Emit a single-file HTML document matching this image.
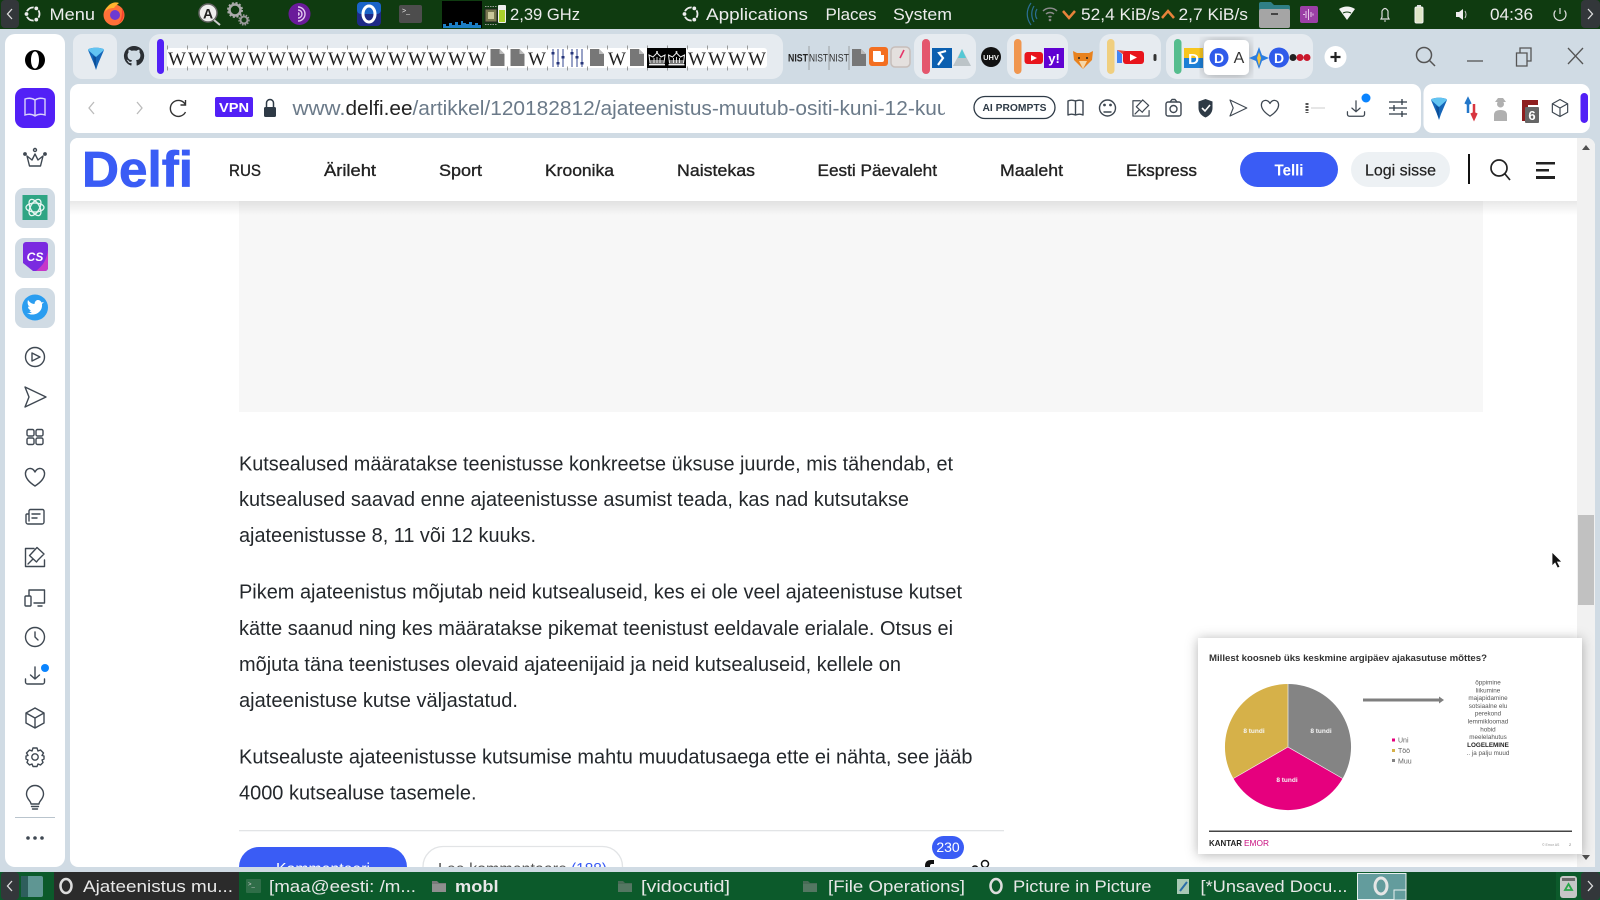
<!DOCTYPE html>
<html lang="et"><head><meta charset="utf-8"><title>Delfi</title>
<style>
html,body{margin:0;padding:0;width:1600px;height:900px;overflow:hidden;background:#d0dbe4}
svg{display:block}
text{font-family:"Liberation Sans",sans-serif}
.s{fill:none;stroke:#3f4852;stroke-width:1.4;stroke-linecap:round;stroke-linejoin:round}
.t{fill:#ececec;font-size:17px}
.b{fill:#e8e8e8;font-size:17px}
.n{fill:#222;font-size:17px;stroke:#222;stroke-width:.35}
.a{fill:#24282c;font-size:20px}
.w{font-family:"Liberation Serif",serif;font-size:19px;fill:#222}
.p{font-size:6.3px;fill:#555;text-anchor:middle}
</style></head><body>
<svg width="1600" height="900" viewBox="0 0 1600 900" xmlns="http://www.w3.org/2000/svg">
<defs>
<clipPath id="page"><path d="M78 138H1587a8 8 0 0 1 8 8V867H78a8 8 0 0 1-8-8V146a8 8 0 0 1 8-8Z"/></clipPath>
<clipPath id="url"><rect x="285" y="90" width="660" height="36"/></clipPath>
<linearGradient id="sh" x1="0" y1="0" x2="0" y2="1"><stop offset="0" stop-color="#000" stop-opacity=".09"/><stop offset="1" stop-color="#000" stop-opacity="0"/></linearGradient>
<filter id="ds" x="-10%" y="-10%" width="120%" height="120%"><feDropShadow dx="0" dy="1" stdDeviation="6" flood-color="#000" flood-opacity=".3"/></filter>
<filter id="soft"><feGaussianBlur stdDeviation=".25"/></filter>
<g id="heart" class="s"><path d="M0 9C-14 0-10-9-4.500-8.500-2.500-8.300-1-7 0-5 1-7 2.500-8.300 4.500-8.500 10-9 14 0 0 9Z"/></g>
<g id="send" class="s"><path d="M-10-10 11 0-10 10-6 0Z"/></g>
<g id="cube" class="s"><path d="M0-10 9-5V5L0 10-9 5V-5ZM-9-5 0 0 9-5M0 0V10"/></g>
<g id="dl" class="s"><path d="M0-9V3M-4.500-1 0 3 4.500-1M-9.500 3V6a2 2 0 0 0 2 2H7.500a2 2 0 0 0 2-2V3"/></g>
<g id="pin" class="s"><path d="M-1-8.500H-9.500V9.500H9.500V3M-7 7-2 2M-4-3 2-9.500 9-3 3 3 1.500 5-5.500-1.500Z"/></g>
<g id="ulogo" fill="none"><circle r="6.500" stroke="#eee" stroke-width="1.800"/><circle cx="-6.500" r="2.400" fill="#eee" stroke="#0f3b10"/><circle cx="3.300" cy="-5.600" r="2.400" fill="#eee" stroke="#0f3b10"/><circle cx="3.300" cy="5.600" r="2.400" fill="#eee" stroke="#0f3b10"/></g>
<g id="folder"><path d="M-7-5H-2L0-3H7V6H-7Z" fill="#7a7a7a"/><rect x="-7" y="-2" width="14" height="8" fill="#8f8f8f"/></g>
<g id="gem"><path d="M-8-6C-8-9 8-9 8-6L2 8 0 14-2 8Z" fill="#1566b8"/><path d="M-8-6C-8-9 8-9 8-6L0 1Z" fill="#62c4f2"/><path d="M-3 0 0 1 0 12-2 8Z" fill="#0c4f98"/></g>
<g id="crown"><path d="M-7 5-8-3-4-1 0-5 4-1 8-3 7 5Z" fill="none" stroke="#eee" stroke-width="1"/><path d="M-7 3H7M-3 5V0M0 5V-1M3 5V0" stroke="#eee" stroke-width=".9"/><circle cx="0" cy="-6" r="1" fill="#eee"/><rect x="-8" y="6" width="16" height="1.400" fill="#eee"/></g>
<g id="doc"><path d="M0 0H9L14 5V17H0Z" fill="#777"/><path d="M9 0V5H14Z" fill="#bbb"/></g>
</defs>

<!-- top panel -->
<rect width="1600" height="29" fill="#0f3b10"/>
<rect x="1" y="0" width="18" height="28" rx="4" fill="#33373a"/>
<path d="M12 9 7.500 14 12 19" fill="none" stroke="#ddd" stroke-width="1.300"/>
<use href="#ulogo" x="33" y="14"/>
<text class="t" x="49.500" y="20" textLength="45.500" lengthAdjust="spacingAndGlyphs">Menu</text>
<circle cx="114" cy="15" r="10.500" fill="#ff7139"/><circle cx="115" cy="15" r="5" fill="#6d3ad1"/><path d="M105 12C107 4 114 1 119 3 117 5 115 6 114 8 110 8 107 9 105 12Z" fill="#ffb52e"/><path d="M122 8C125 13 124 20 119 23 122 19 122 13 122 8Z" fill="#f5412d"/>
<circle cx="208" cy="13" r="9" fill="#eee" stroke="#666" stroke-width="1.500"/><text x="203" y="18.500" font-size="14" font-weight="700" fill="#222">A</text><path d="M214 20 220 25" stroke="#ccc" stroke-width="2"/>
<circle cx="235" cy="10" r="5.500" fill="none" stroke="#aaa" stroke-width="2.500"/><circle cx="235" cy="10" r="7" fill="none" stroke="#aaa" stroke-width="2" stroke-dasharray="2 1.700"/><circle cx="244" cy="20" r="3.500" fill="none" stroke="#999" stroke-width="2"/><circle cx="244" cy="20" r="5" fill="none" stroke="#999" stroke-width="1.400" stroke-dasharray="1.500 1.300"/>
<circle cx="299.500" cy="14" r="11" fill="#6a1b9a"/><path d="M298 7A7 7 0 0 1 298 21M298 10A4 4 0 0 1 298 18M298 13A1 1 0 0 1 298 15" fill="none" stroke="#e3c9f0" stroke-width="1.400"/>
<rect x="357" y="2" width="24" height="24" rx="4" fill="#1e2a86"/><rect x="357" y="2" width="24" height="12" rx="4" fill="#1a64c8"/><ellipse cx="369" cy="14" rx="6" ry="8" fill="none" stroke="#fff" stroke-width="3"/>
<rect x="399" y="5" width="23" height="18" rx="2" fill="#4d4d4d"/><text x="402" y="13" font-size="7" fill="#eee">&gt;_</text>
<rect x="442" y="1" width="40" height="27" fill="#000"/>
<path d="M443 28V24H446V26H449V23H452V25H455V22H458V25H461V21H463V23H466V24H469V22H472V25H475V23H478V25H481V28Z" fill="#1c7fc4"/>
<rect x="485" y="9" width="12" height="13" fill="#77784f" stroke="#222"/><rect x="488" y="12" width="6" height="7" fill="#c9c79a"/><path d="M485 6.500H497M485 24.500H497" stroke="#999" stroke-dasharray="1.500 1"/><rect x="498" y="5" width="8" height="18" rx="1" fill="#eee"/><rect x="499" y="10" width="6" height="12" fill="#a9d22b"/>
<text class="t" x="510" y="20" textLength="70" lengthAdjust="spacingAndGlyphs">2,39 GHz</text>
<use href="#ulogo" x="691" y="14"/>
<text class="t" x="706" y="20" textLength="102" lengthAdjust="spacingAndGlyphs">Applications</text>
<text class="t" x="825.500" y="20" textLength="51" lengthAdjust="spacingAndGlyphs">Places</text>
<text class="t" x="893" y="20" textLength="59" lengthAdjust="spacingAndGlyphs">System</text>
<path d="M1031 3C1026 10 1026 18 1031 25M1034 6C1031 11 1031 17 1034 22M1037 9C1035 12 1035 16 1037 19" fill="none" stroke="#2b6f96" stroke-width="1.200"/>
<path d="M1043 11A10 10 0 0 1 1057 11M1046 14A6 6 0 0 1 1054 14M1048.500 17A3 3 0 0 1 1051.500 17" fill="none" stroke="#8a8a8a" stroke-width="1.500"/><circle cx="1050" cy="20" r="1.300" fill="#8a8a8a"/>
<path d="M1063 11 1069 18 1075 11" fill="none" stroke="#e8833a" stroke-width="2.500"/>
<text class="t" x="1081" y="20" textLength="79" lengthAdjust="spacingAndGlyphs">52,4 KiB/s</text>
<path d="M1162 18 1168 11 1174 18" fill="none" stroke="#e8833a" stroke-width="2.500"/>
<text class="t" x="1178.500" y="20" textLength="69.500" lengthAdjust="spacingAndGlyphs">2,7 KiB/s</text>
<path d="M1259 4Q1259 2 1261 2H1271L1274 5H1288Q1290 5 1290 7V10H1259Z" fill="#2f7f86"/><rect x="1259" y="9" width="31" height="19" rx="2" fill="#a5a5a5"/><rect x="1271" y="13" width="7" height="2" fill="#444"/>
<rect x="1300" y="6" width="18" height="17" rx="2" fill="#9b3fa6"/><path d="M1303 14.500H1305M1306 11V18M1308.500 9V20M1311 12V17M1313 13.500V15.500" stroke="#e7c9ea" stroke-width="1"/>
<path d="M1339 9Q1347 4 1355 9L1347 20Z" fill="#f2f2f2"/><path d="M1343 13Q1347 11 1351 13" fill="none" stroke="#0f3b10" stroke-width="1"/>
<path d="M1381 19H1389L1388 17V11Q1385 6 1382 11V17Z" fill="none" stroke="#ddd" stroke-width="1.200"/><path d="M1384 21H1386" stroke="#ddd"/>
<rect x="1415" y="7" width="8" height="16" rx="1.500" fill="#dfe6c8" stroke="#f2f2f2"/><rect x="1417" y="5" width="4" height="2" fill="#ddd"/>
<path d="M1456 12H1459L1463 9V20L1459 17H1456Z" fill="#eee"/><path d="M1465 11Q1467 14.500 1465 18" fill="none" stroke="#ccc"/>
<text class="t" x="1490" y="20" textLength="43" lengthAdjust="spacingAndGlyphs">04:36</text>
<path d="M1555.500 10.500A6 6 0 1 0 1564.500 10.500M1560 8V14" fill="none" stroke="#ddd" stroke-width="1.200"/>
<rect x="1581" y="0" width="19" height="28" rx="4" fill="#33373a"/>
<path d="M1588 9 1592.500 14 1588 19" fill="none" stroke="#ddd" stroke-width="1.300"/>

<!-- sidebar -->
<rect x="5" y="34" width="60" height="833" rx="10" fill="#fff"/>
<path fill-rule="evenodd" d="M35 50A10 10 0 0 1 35 70 10 10 0 0 1 35 50ZM35 51.500C32.500 51.500 31 55.500 31 60S32.500 68.500 35 68.500 39 64.500 39 60 37.500 51.500 35 51.500Z" fill="#000"/>
<rect x="15" y="88" width="40" height="40" rx="9" fill="#5220f6"/>
<path d="M35 100C32 98 28 98 25 99V115C28 114 32 114 35 116 38 114 42 114 45 115V99C42 98 38 98 35 100ZM35 100V116" fill="none" stroke="#d9d2fb" stroke-width="1.400"/>
<g class="s" transform="translate(35 158)"><path d="M-8-2-5.500 8H5.500L8-2 3 2 0-4-3 2Z"/><circle cx="0" cy="-8" r="1.500"/><circle cx="-10" cy="-4" r="1.200" fill="#3f4852"/><circle cx="10" cy="-4" r="1.200" fill="#3f4852"/></g>
<rect x="15" y="188" width="40" height="40" rx="9" fill="#d0dbe4"/><rect x="22.500" y="195" width="25" height="25" fill="#2fa584"/>
<g fill="none" stroke="#e8f6f2" stroke-width="1.300" transform="translate(35 207.500)"><ellipse rx="9" ry="4.500"/><ellipse rx="9" ry="4.500" transform="rotate(60)"/><ellipse rx="9" ry="4.500" transform="rotate(-60)"/></g>
<rect x="15" y="238" width="40" height="40" rx="9" fill="#d0dbe4"/>
<path d="M23 245a3 3 0 0 1 3-3H45a3 3 0 0 1 3 3V268a3 3 0 0 1-3 3H33L23 263Z" fill="#7a2ae0"/><path d="M36 271H45a3 3 0 0 0 3-3V250C46 262 42 266 36 271Z" fill="#c636c9"/>
<text x="35" y="261" text-anchor="middle" font-size="12" font-weight="700" font-style="italic" fill="#fff">CS</text>
<rect x="15" y="288" width="40" height="40" rx="9" fill="#d0dbe4"/><circle cx="35" cy="307.500" r="13" fill="#2a9df0"/>
<path d="M27 313C33 317 43 313 42 304L44 302 41.500 302.500C40 299 35 299 34.500 304 31.500 304 29.500 302 28 300 27 303 28 306 30 307L28 306.500C28 309 30 310 31 310.500L29.500 311C30 312 31 312.500 32 312.500 31 313 29 313.500 27 313Z" fill="#fff"/>
<g class="s" transform="translate(35 357)"><circle r="9.500"/><path d="M-3-4 5 0-3 4Z"/></g>
<use href="#send" x="35" y="397"/>
<g class="s" transform="translate(35 437)"><rect x="-8" y="-7.500" width="7" height="6.500" rx="1.500"/><rect x="1" y="-7.500" width="7" height="6.500" rx="1.500"/><rect x="-8" y="1" width="7" height="6.500" rx="1.500"/><rect x="1" y="1" width="7" height="6.500" rx="1.500"/></g>
<use href="#heart" x="35" y="477"/>
<g class="s" transform="translate(35 517)"><path d="M-6-3V-6a1.500 1.500 0 0 1 1.500-1.500H7.500A1.500 1.500 0 0 1 9-6V5a2 2 0 0 1-2 2H-7a2 2 0 0 1-2-2V-2a1 1 0 0 1 1-1H-6V4M-3-3H5M-3 1H2"/></g>
<use href="#pin" x="35" y="557"/>
<g class="s" transform="translate(35 598)"><path d="M-6-2V-8H9.500V5H-1M3 8H7M-9-2H-5a1 1 0 0 1 1 1V7a1 1 0 0 1-1 1H-9a1 1 0 0 1-1-1V-1a1 1 0 0 1 1-1Z"/></g>
<g class="s" transform="translate(35 637)"><circle r="9.500"/><path d="M0-5V0L3 3"/></g>
<use href="#dl" x="35" y="676"/><circle cx="45" cy="668" r="4" fill="#0a84ff"/>
<use href="#cube" x="35" y="718"/>
<g class="s" transform="translate(35 757)"><circle r="3.200"/><path d="M-2-9H2L3-6 5.500-7 8.500-4 7-1.500 9-1V2L7 3 8 5.500 5.500 8 3 7 2 9.500H-2L-3 7-5.500 8-8 5.500-7 3-9 2V-1L-7-1.500-8.500-4-5.500-7-3-6Z"/></g>
<g class="s" transform="translate(35 799)"><path d="M-4 5C-4 2-8.500 0-8.500-5A8.500 8.500 0 0 1 8.500-5C8.500 0 4 2 4 5ZM-3.500 7.500H3.500M-2.500 10H2.500"/></g>
<rect x="15" y="817" width="40" height="1" fill="#b9c4cd"/>
<g fill="#3f4852"><circle cx="28" cy="838" r="1.800"/><circle cx="35" cy="838" r="1.800"/><circle cx="42" cy="838" r="1.800"/></g>

<!-- tab strip -->
<rect x="73" y="34" width="44" height="45" rx="9" fill="#e6ebf0"/>
<use href="#gem" x="96" y="56"/>
<path d="M134 46a10 10 0 0 0-3.200 19.500c.5.100.7-.2.700-.5V63c-2.800.6-3.400-1.200-3.400-1.200-.5-1.100-1.100-1.500-1.100-1.500-.9-.6.100-.6.100-.6 1 .1 1.500 1 1.500 1 .9 1.500 2.300 1.100 2.900.8.100-.6.400-1.100.6-1.300-2.200-.3-4.500-1.100-4.500-5 0-1.100.4-2 1-2.700-.1-.3-.4-1.300.1-2.700 0 0 .8-.3 2.800 1a9.600 9.600 0 0 1 5 0c1.900-1.300 2.800-1 2.800-1 .5 1.400.2 2.400.1 2.700.6.700 1 1.600 1 2.700 0 3.900-2.300 4.700-4.500 5 .4.300.7.900.7 1.900V65c0 .3.200.6.700.5A10 10 0 0 0 134 46Z" fill="#2a2e33"/>
<rect x="149" y="34" width="634" height="45" rx="11" fill="#e6ebf0"/>
<rect x="157" y="39" width="7" height="35" rx="3.500" fill="#5220f6"/>
<rect x="167" y="48" width="600" height="20" rx="3" fill="#fff"/>
<path d="M167 47.500H767M167 68.500H767" stroke="#777" stroke-width="4" stroke-dasharray=".7 19.300" fill="none"/>
<text class="w" x="168 188 208 228 248 268 288 308 328 348 368 388 408 428 448 468 528 608 688 708 728 748" y="65">WWWWWWWWWWWWWWWWWWWWWW</text>
<use href="#doc" x="490.500" y="49"/><use href="#doc" x="510.500" y="49"/><use href="#doc" x="590" y="49"/><use href="#doc" x="630" y="49"/>
<g stroke="#31468f" stroke-width="1"><path d="M553 49V67M558 49V67M563 49V67M572 49V67M577 49V67M582 49V67"/></g>
<g fill="#26357a"><rect x="551.500" y="52" width="3" height="2.500"/><rect x="556.500" y="62" width="3" height="2.500"/><rect x="561.500" y="56" width="3" height="2.500"/><rect x="570.500" y="52" width="3" height="2.500"/><rect x="575.500" y="56" width="3" height="2.500"/><rect x="580.500" y="62" width="3" height="2.500"/></g>
<rect x="647" y="48" width="39" height="20" fill="#000"/>
<use href="#crown" x="657" y="58"/><use href="#crown" x="676.500" y="58"/>
<g stroke="#888" stroke-width=".7"><path d="M809 46V70M829 46V70M849 46V70"/></g>
<text x="788" y="61.500" font-size="11" font-weight="700" fill="#222" textLength="20" lengthAdjust="spacingAndGlyphs">NIST</text>
<text x="809" y="61.500" font-size="11" fill="#333" textLength="19" lengthAdjust="spacingAndGlyphs">NIST</text>
<text x="829" y="61.500" font-size="11" fill="#333" textLength="20" lengthAdjust="spacingAndGlyphs">NIST</text>
<use href="#doc" x="852" y="49"/>
<rect x="869" y="47" width="19" height="19" rx="3" fill="#f36f21"/><path d="M873 51H880Q881 51 881 53V55H884V60Q884 62 882 62H875Q873 62 873 60Z" fill="#fff"/>
<rect x="891" y="47" width="19" height="20" rx="4" fill="#e4e0de" stroke="#c7beba" stroke-width="1.500"/><path d="M900 58 904 50" stroke="#e6376a" stroke-width="1.600"/>

<rect x="914" y="34" width="62" height="45" rx="11" fill="#e6ebf0"/>
<rect x="922" y="39" width="8" height="35" rx="4" fill="#e4566d"/>
<rect x="932" y="48" width="20" height="20" fill="#0b5fb0"/><path d="M946 51 939 53 943 58 938 65" fill="none" stroke="#fff" stroke-width="2.200"/>
<path d="M962 49 971 66H953Z" fill="#bcc4c8"/><path d="M962 49 966 58H958Z" fill="#54c8d5"/>
<circle cx="991" cy="57" r="10" fill="#111"/><text x="991" y="60" text-anchor="middle" font-size="7.500" font-weight="700" fill="#eee">UHV</text>
<rect x="1007" y="34" width="61" height="45" rx="11" fill="#e6ebf0"/>
<rect x="1014" y="39" width="7.500" height="35" rx="3.700" fill="#f0964f"/>
<rect x="1024.500" y="52" width="18.500" height="12" rx="3" fill="#e8141c"/><path d="M1031 55 1037 58 1031 61Z" fill="#fff"/>
<rect x="1044" y="48" width="20" height="20" fill="#6001d2"/><text x="1054" y="63" text-anchor="middle" font-size="13" font-weight="700" fill="#fff">y!</text>
<path d="M1073 51 1077 53H1089L1093 51 1092 60 1083 69 1074 60Z" fill="#e8821e"/><path d="M1083 69 1079 61H1087Z" fill="#f6d7a8"/><circle cx="1079" cy="58" r="1" fill="#222"/><circle cx="1087" cy="58" r="1" fill="#222"/>
<rect x="1099.500" y="34" width="61.500" height="45" rx="11" fill="#e6ebf0"/>
<rect x="1107" y="39" width="7.500" height="35" rx="3.700" fill="#f0cf7f"/>
<path d="M1117 50V63H1122V54Z" fill="#4285f4"/><path d="M1117 50 1124 55 1126 51" fill="#ea4335"/>
<rect x="1123" y="51" width="21" height="13" rx="3" fill="#e8141c"/><path d="M1130 54 1137 57.500 1130 61Z" fill="#fff"/>
<rect x="1153.500" y="54" width="3" height="7" rx="1.500" fill="#333"/>
<rect x="1166" y="34" width="147" height="45" rx="11" fill="#e6ebf0"/>
<rect x="1174" y="39" width="7.500" height="35" rx="3.700" fill="#55bd8e"/>
<rect x="1184" y="48" width="19" height="10" fill="#f7c51e"/><rect x="1184" y="58" width="19" height="10" fill="#1d7fd6"/><text x="1193.500" y="64" text-anchor="middle" font-size="15" font-weight="700" fill="#fff">D</text>
<rect x="1204" y="40" width="45" height="35" rx="5" fill="#fff" filter="url(#ds)"/>
<circle cx="1219" cy="57.500" r="9.500" fill="#2f5bea"/><text x="1219" y="63" text-anchor="middle" font-size="14" font-weight="700" fill="#fff">D</text>
<text x="1239" y="63" text-anchor="middle" font-size="16" fill="#333">A</text>
<path d="M1259 47 1262 55 1269 58 1262 61 1259 69 1256 61 1249 58 1256 55Z" fill="#2a7de1"/><path d="M1259 52 1261 58 1259 66 1257 58Z" fill="#f5c33b"/>
<circle cx="1279" cy="57.500" r="10" fill="#2f5bea"/><text x="1279" y="63" text-anchor="middle" font-size="14" font-weight="700" fill="#fff">D</text>
<circle cx="1293" cy="57.500" r="3.500" fill="#222"/><circle cx="1300" cy="57.500" r="3.500" fill="#c9182c"/><circle cx="1307" cy="57.500" r="3.500" fill="#c9182c"/>
<circle cx="1335.500" cy="57" r="11" fill="#fff"/><path d="M1330.500 57H1340.500M1335.500 52V62" stroke="#222" stroke-width="2.200"/>
<g fill="none" stroke="#555" stroke-width="1.500"><circle cx="1424" cy="55" r="7.500"/><path d="M1429.500 60.500 1435 66"/><path d="M1467 61H1483" stroke-width="1.300"/><path d="M1516.500 53H1527V66H1516.500ZM1520 53V48H1531V61H1527" stroke-width="1.300"/><path d="M1568 48 1583 64M1583 48 1568 64" stroke-width="1.300"/></g>

<!-- address bar -->
<rect x="70" y="84" width="1351" height="49" rx="9" fill="#fff"/>
<rect x="1423.500" y="84" width="166.500" height="49" rx="9" fill="#fff"/>
<g fill="none" stroke-width="1.300"><path d="M94 102 89 108 94 114" stroke="#bbb"/><path d="M137 102 142 108 137 114" stroke="#bbb"/>
<path d="M185 104A8 8 0 1 0 185.500 112M185.500 100V105H180.500" stroke="#333" stroke-width="1.400"/></g>
<rect x="215" y="97" width="38" height="20" rx="2" fill="#5220f6"/><text x="234" y="112" text-anchor="middle" font-size="13" font-weight="700" fill="#fff" textLength="30" lengthAdjust="spacingAndGlyphs">VPN</text>
<rect x="264" y="107" width="12" height="10" rx="1.500" fill="#2e3a46"/><path d="M266.500 107V103A3.500 3.500 0 0 1 273.500 103V107" fill="none" stroke="#2e3a46" stroke-width="1.500"/>
<g clip-path="url(#url)" font-size="20">
<text x="292.500" y="115" fill="#6b7a89" textLength="53" lengthAdjust="spacingAndGlyphs">www.</text>
<text x="345.500" y="115" fill="#222" textLength="67" lengthAdjust="spacingAndGlyphs">delfi.ee</text>
<text x="412.500" y="115" fill="#6b7a89" textLength="536" lengthAdjust="spacingAndGlyphs">/artikkel/120182812/ajateenistus-muutub-ositi-kuni-12-kuu</text>
</g>
<rect x="974" y="96.500" width="81" height="22" rx="11" fill="#fff" stroke="#2e3a46" stroke-width="1.300"/>
<text x="1014.500" y="111" text-anchor="middle" font-size="10" font-weight="700" fill="#2e3a46" textLength="64" lengthAdjust="spacingAndGlyphs">AI PROMPTS</text>
<g class="s"><path d="M1075.500 101C1073 100 1070 100 1068 101V115C1070 114 1073 114 1075.500 115 1078 114 1081 114 1083 115V101C1081 100 1078 100 1075.500 101ZM1075.500 101V115"/>
<circle cx="1107.500" cy="108" r="8"/><path d="M1104 112H1111"/><circle cx="1104.500" cy="105" r=".7"/><circle cx="1110.500" cy="105" r=".7"/>
<rect x="1166" y="102" width="15" height="14" rx="2"/><path d="M1170 102 1172 99.500H1175L1177 102"/><circle cx="1173.500" cy="109" r="3.500"/></g>
<g transform="translate(1141 108) scale(.85)"><use href="#pin"/></g>
<path d="M1205.500 99 1212.500 101.500V108C1212.500 113 1209 116 1205.500 117.500 1202 116 1198.500 113 1198.500 108V101.500Z" fill="#2e3a46"/><path d="M1202 108 1205 111 1210 105" fill="none" stroke="#fff" stroke-width="1.600"/>
<g transform="translate(1238 108) scale(.8)"><use href="#send"/></g>
<g transform="translate(1270 108) scale(.9)"><use href="#heart"/></g>
<path d="M1307 103V113" stroke="#555" stroke-width="3" stroke-dasharray="2 1"/><path d="M1311 108H1325" stroke="#ddd" stroke-width="1.500"/>
<g transform="translate(1356 109) scale(.9)"><use href="#dl"/></g><circle cx="1366" cy="98" r="4.500" fill="#0a84ff"/>
<path d="M1389 102H1407M1389 108H1407M1389 114H1407M1402 99V105M1394 105V111M1402 111V117" stroke="#2e3a46" stroke-width="1.300" fill="none"/>
<use href="#gem" x="1439" y="106"/>
<path d="M1468 100V113M1465.500 104 1468 99 1470.500 104" fill="none" stroke="#2277c9" stroke-width="2.500"/><path d="M1474 104V117M1471.500 113 1474 118.500 1476.500 113" fill="none" stroke="#d8353f" stroke-width="2.500"/>
<g fill="#b0b0b0"><circle cx="1500.500" cy="104" r="3.500"/><path d="M1494 121V115Q1494 110 1500.500 110 1507 110 1507 115V121Z"/><path d="M1495 102H1506L1503 98H1498Z"/></g>
<path d="M1522 100H1538V105H1522Z" fill="#8e1e1e"/><rect x="1522" y="104" width="6" height="17" fill="#8e1e1e"/><rect x="1525" y="107" width="14" height="16" rx="1" fill="#666"/><text x="1532" y="120" text-anchor="middle" font-size="13" font-weight="700" fill="#fff">6</text>
<g transform="translate(1560 108) scale(.85)"><use href="#cube"/></g>
<rect x="1580.500" y="93" width="7.500" height="30" rx="3.700" fill="#5220f6"/>

<!-- web page -->
<g clip-path="url(#page)">
<rect x="70" y="138" width="1525" height="729" fill="#fff"/>
<rect x="239" y="201" width="1244" height="211" fill="#f7f7f7"/>
<rect x="70" y="201" width="1507" height="14" fill="url(#sh)"/>
<rect x="70" y="138" width="1507" height="63" fill="#fff"/>

<text x="82" y="186.500" font-size="50" font-weight="700" fill="#3a5cf5" textLength="111" lengthAdjust="spacingAndGlyphs" stroke="#3a5cf5" stroke-width=".8">Delfi</text>
<text class="n" x="229" y="176" textLength="32" lengthAdjust="spacingAndGlyphs">RUS</text>
<text class="n" x="324" y="176" textLength="52" lengthAdjust="spacingAndGlyphs">Ärileht</text>
<text class="n" x="439" y="176" textLength="43" lengthAdjust="spacingAndGlyphs">Sport</text>
<text class="n" x="545" y="176" textLength="69" lengthAdjust="spacingAndGlyphs">Kroonika</text>
<text class="n" x="677" y="176" textLength="78" lengthAdjust="spacingAndGlyphs">Naistekas</text>
<text class="n" x="817.500" y="176" textLength="119.500" lengthAdjust="spacingAndGlyphs">Eesti Päevaleht</text>
<text class="n" x="1000" y="176" textLength="63" lengthAdjust="spacingAndGlyphs">Maaleht</text>
<text class="n" x="1126" y="176" textLength="71" lengthAdjust="spacingAndGlyphs">Ekspress</text>
<rect x="1240" y="152" width="98" height="35" rx="17.500" fill="#3a5cf5"/>
<text x="1289" y="175.500" text-anchor="middle" font-size="16" font-weight="700" fill="#fff" textLength="29" lengthAdjust="spacingAndGlyphs">Telli</text>
<rect x="1351" y="152" width="99" height="35" rx="17.500" fill="#edf1f4"/>
<text x="1365" y="175.500" font-size="16" fill="#222" textLength="71" lengthAdjust="spacingAndGlyphs" stroke="#222" stroke-width=".2">Logi sisse</text>
<rect x="1468" y="154" width="2" height="30" fill="#111"/>
<g fill="none" stroke="#222" stroke-width="1.700"><circle cx="1499" cy="168" r="8"/><path d="M1505 174 1510 180"/></g>
<g fill="#222"><rect x="1536" y="162" width="19" height="2.500"/><rect x="1536" y="169" width="13" height="2.500"/><rect x="1536" y="176" width="19" height="3"/></g>

<rect x="1577" y="138" width="18" height="729" fill="#f1f1f1"/>
<path d="M1586 145 1590 150H1582Z" fill="#505050"/><path d="M1586 860 1590 855H1582Z" fill="#505050"/>
<rect x="1578" y="515" width="16" height="90" fill="#c1c1c1"/>

<g class="a">
<text x="239" y="470.500" textLength="714" lengthAdjust="spacingAndGlyphs">Kutsealused määratakse teenistusse konkreetse üksuse juurde, mis tähendab, et</text>
<text x="239" y="506" textLength="670" lengthAdjust="spacingAndGlyphs">kutsealused saavad enne ajateenistusse asumist teada, kas nad kutsutakse</text>
<text x="239" y="542" textLength="297" lengthAdjust="spacingAndGlyphs">ajateenistusse 8, 11 või 12 kuuks.</text>
<text x="239" y="598.500" textLength="723" lengthAdjust="spacingAndGlyphs">Pikem ajateenistus mõjutab neid kutsealuseid, kes ei ole veel ajateenistuse kutset</text>
<text x="239" y="635" textLength="714" lengthAdjust="spacingAndGlyphs">kätte saanud ning kes määratakse pikemat teenistust eeldavale erialale. Otsus ei</text>
<text x="239" y="671" textLength="662" lengthAdjust="spacingAndGlyphs">mõjuta täna teenistuses olevaid ajateenijaid ja neid kutsealuseid, kellele on</text>
<text x="239" y="707" textLength="279" lengthAdjust="spacingAndGlyphs">ajateenistuse kutse väljastatud.</text>
<text x="239" y="763.500" textLength="733.500" lengthAdjust="spacingAndGlyphs">Kutsealuste ajateenistusse kutsumise mahtu muudatusaega ette ei nähta, see jääb</text>
<text x="239" y="799.500" textLength="237.500" lengthAdjust="spacingAndGlyphs">4000 kutsealuse tasemele.</text>
</g>
<rect x="239" y="830" width="765" height="1.300" fill="#e2e4e6"/>
<rect x="239" y="847" width="168" height="44" rx="20" fill="#3a5cf5"/>
<text x="276" y="874" font-size="16" fill="#fff" textLength="94" lengthAdjust="spacingAndGlyphs">Kommenteeri</text>
<rect x="423" y="846.500" width="199.500" height="44" rx="20" fill="#fff" stroke="#e2e4e6" stroke-width="1.300"/>
<text x="438" y="874" font-size="16" fill="#555" textLength="129" lengthAdjust="spacingAndGlyphs">Lee kommentaare</text>
<text x="571" y="874" font-size="16" fill="#3a5cf5" textLength="36" lengthAdjust="spacingAndGlyphs">(188)</text>
<path d="M925 880V866Q925 860 931 860H934V864H932Q930 864 930 866V880Z" fill="#111"/>
<circle cx="985" cy="864" r="3.500" fill="none" stroke="#111" stroke-width="1.500"/><circle cx="975" cy="869" r="3" fill="none" stroke="#111" stroke-width="1.500"/>
<rect x="932" y="836" width="32" height="23" rx="11.500" fill="#3a5cf5"/>
<text x="948" y="852" text-anchor="middle" font-size="14" fill="#fff">230</text>

<!-- picture in picture -->
<rect x="1198" y="638" width="384" height="216" fill="#fff" filter="url(#ds)"/>
<g filter="url(#soft)">
<text x="1209" y="661" font-size="9.500" font-weight="700" fill="#333" textLength="278" lengthAdjust="spacingAndGlyphs">Millest koosneb üks keskmine argipäev ajakasutuse mõttes?</text>
<path d="M1288 747V684A63 63 0 0 1 1342.600 778.500Z" fill="#848484"/>
<path d="M1288 747 1342.600 778.500A63 63 0 0 1 1233.400 778.500Z" fill="#e6007e"/>
<path d="M1288 747 1233.400 778.500A63 63 0 0 1 1288 684Z" fill="#d6b148"/>
<path d="M1288 684V747L1342.600 778.500M1288 747 1233.400 778.500" fill="none" stroke="#f0f0f0" stroke-width=".7"/>
<g font-size="6.500" font-weight="700" fill="#f6f6f6" text-anchor="middle"><text x="1254" y="733">8 tundi</text><text x="1321" y="733">8 tundi</text><text x="1287" y="782">8 tundi</text></g>
<path d="M1363 700H1440" stroke="#7f7f7f" stroke-width="3"/><path d="M1439 696.500 1444 700 1439 703.500Z" fill="#7f7f7f"/>
<g font-size="7" fill="#666"><rect x="1392" y="738.500" width="3" height="3" fill="#e6007e"/><text x="1398" y="742.500">Uni</text><rect x="1392" y="749" width="3" height="3" fill="#d6b148"/><text x="1398" y="753">Töö</text><rect x="1392" y="759" width="3" height="3" fill="#848484"/><text x="1398" y="763.500">Muu</text></g>
<text class="p" x="1488" y="684.500">õppimine</text><text class="p" x="1488" y="692.300">liikumine</text><text class="p" x="1488" y="700">majapidamine</text><text class="p" x="1488" y="707.800">sotsiaalne elu</text><text class="p" x="1488" y="715.700">perekond</text><text class="p" x="1488" y="723.500">lemmikloomad</text><text class="p" x="1488" y="731.300">hobid</text><text class="p" x="1488" y="739.200">meelelahutus</text><text class="p" x="1488" y="747" font-weight="700" style="fill:#222">LOGELEMINE</text><text class="p" x="1488" y="755">.. ja palju muud</text>
<rect x="1209" y="830.500" width="363" height="1.500" fill="#444"/>
<text x="1209" y="846" font-size="8.500" font-weight="700" fill="#222" textLength="33" lengthAdjust="spacingAndGlyphs">KANTAR</text>
<text x="1244" y="846" font-size="8.500" fill="#c8107f" textLength="25" lengthAdjust="spacingAndGlyphs">EMOR</text>
<text x="1542" y="846" font-size="3.500" fill="#999">© Emor AS</text><text x="1569" y="846" font-size="4" fill="#777">2</text>
</g>
<!-- cursor -->
<path d="M1552 552V566L1555 563 1557.500 568 1560 567 1557.500 562H1562Z" fill="#111" stroke="#fff" stroke-width=".8"/>
</g>

<!-- bottom panel -->
<rect y="872" width="1600" height="28" fill="#0c5a2b"/>
<rect x="1406" y="872" width="150" height="28" fill="#0a4d25"/>
<rect x="1" y="872" width="18" height="28" rx="4" fill="#33373a"/>
<path d="M12 881 7.500 886 12 891" fill="none" stroke="#ddd" stroke-width="1.300"/>
<rect x="21" y="876" width="22" height="21" rx="2" fill="#5f9693"/><rect x="21" y="876" width="7" height="21" fill="#2e5e5c"/>
<rect x="54" y="872" width="185" height="28" fill="#2b2b2b"/>
<ellipse cx="66" cy="886" rx="5.500" ry="7" fill="none" stroke="#ddd" stroke-width="2.500"/>
<text class="b" x="83" y="892" textLength="150" lengthAdjust="spacingAndGlyphs">Ajateenistus mu...</text>
<rect x="246" y="879" width="15" height="14" rx="1" fill="#2f6e48"/><text x="248" y="886" font-size="6" fill="#ccc">&gt;_</text>
<text class="b" x="269" y="892" textLength="147" lengthAdjust="spacingAndGlyphs">[maa@eesti: /m...</text>
<g transform="translate(439 886)"><use href="#folder"/></g>
<text class="b" x="455" y="892" textLength="43.500" lengthAdjust="spacingAndGlyphs" font-weight="700">mobl</text>
<g transform="translate(625 886)" opacity=".55"><use href="#folder"/></g>
<text class="b" x="641" y="892" textLength="89" lengthAdjust="spacingAndGlyphs">[vidocutid]</text>
<g transform="translate(810 886)" opacity=".55"><use href="#folder"/></g>
<text class="b" x="828" y="892" textLength="137" lengthAdjust="spacingAndGlyphs">[File Operations]</text>
<ellipse cx="996" cy="886" rx="5.500" ry="7" fill="none" stroke="#ddd" stroke-width="2.500"/>
<text class="b" x="1013" y="892" textLength="138.500" lengthAdjust="spacingAndGlyphs">Picture in Picture</text>
<rect x="1177" y="879" width="12" height="15" fill="#a9c9b5"/><path d="M1180 891 1187 882" stroke="#2a6ea8" stroke-width="2"/>
<text class="b" x="1200.500" y="892" textLength="147" lengthAdjust="spacingAndGlyphs">[*Unsaved Docu...</text>
<rect x="1357.500" y="873.500" width="48.500" height="26" fill="#639c9d" stroke="#e8f0f0" stroke-width="1"/>
<rect x="1394" y="890" width="12" height="10" fill="#639c9d" stroke="#e8f0f0"/>
<ellipse cx="1381" cy="886" rx="6" ry="8" fill="none" stroke="#e6e6e6" stroke-width="3"/>
<rect x="1560" y="876" width="17" height="22" rx="3" fill="#c6c6c6"/><rect x="1562" y="878" width="13" height="3" fill="#6a6a6a"/><path d="M1568.500 884 1572 890H1565Z" fill="none" stroke="#2aa648" stroke-width="1.800"/>
<rect x="1581" y="872" width="19" height="28" rx="4" fill="#33373a"/>
<path d="M1588 881 1592.500 886 1588 891" fill="none" stroke="#ddd" stroke-width="1.300"/>
</svg>
</body></html>
